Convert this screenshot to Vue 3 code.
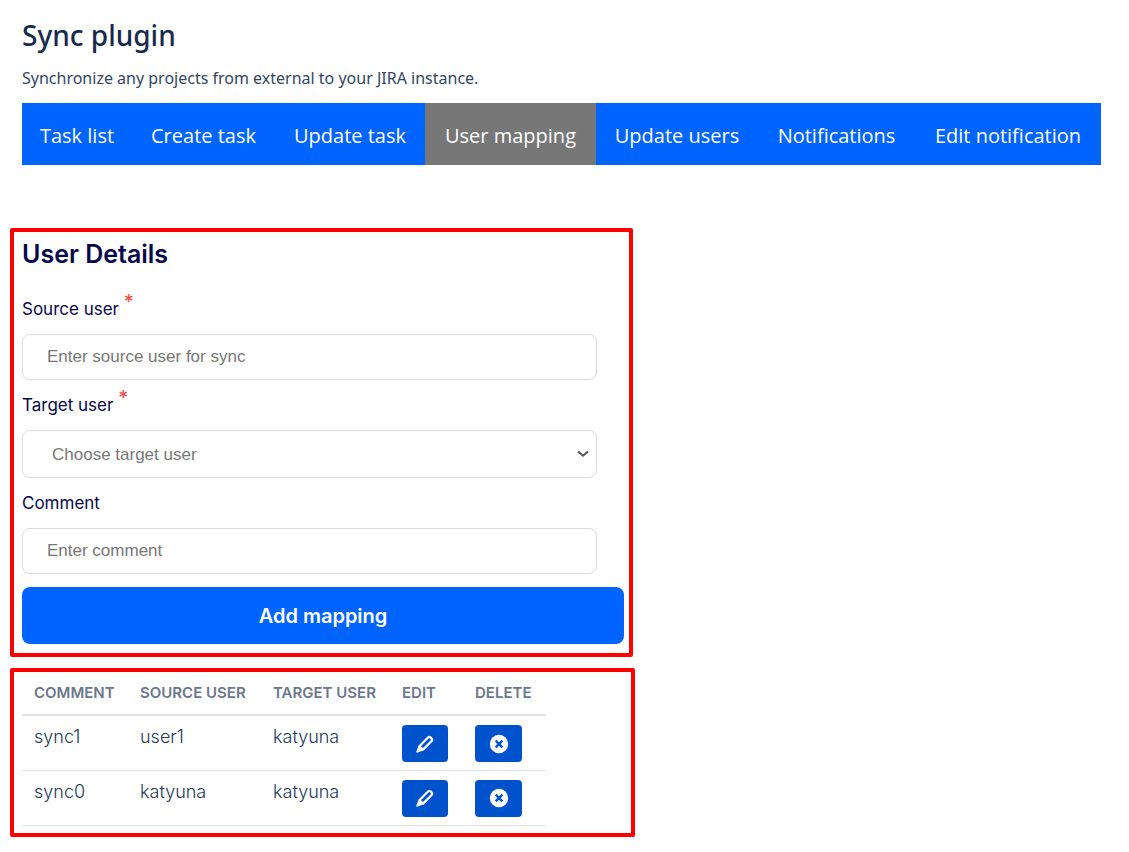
<script setup>
import { ref } from 'vue'

const tabs = ['Task list', 'Create task', 'Update task', 'User mapping', 'Update users', 'Notifications', 'Edit notification']
const activeTab = ref('User mapping')
const source = ref('')
const target = ref('')
const comment = ref('')
const rows = ref([
  { comment: 'sync1', source: 'user1', target: 'katyuna' },
  { comment: 'sync0', source: 'katyuna', target: 'katyuna' },
])
</script>

<template>
  <main class="page">
    <header class="intro">
      <h1>Sync plugin</h1>
      <p>Synchronize any projects from external to your JIRA instance.</p>
    </header>

    <nav class="tabs">
      <a
        v-for="tab in tabs"
        :key="tab"
        href="#"
        :class="{ active: tab === activeTab }"
        @click.prevent="activeTab = tab"
      >{{ tab }}</a>
    </nav>

    <form class="panel details" @submit.prevent>
      <h2>User Details</h2>
      <div class="fields">
        <label for="source">Source user <span class="req">*</span></label>
        <input id="source" v-model="source" type="text" placeholder="Enter source user for sync">
        <label for="target">Target user <span class="req">*</span></label>
        <div class="select">
          <select id="target" v-model="target">
            <option value="">Choose target user</option>
            <option value="katyuna">katyuna</option>
          </select>
          <svg viewBox="0 0 12 8" width="12" height="8" aria-hidden="true"><path d="M1 1.500 6 5.800l5-4.300" /></svg>
        </div>
        <label for="comment">Comment</label>
        <input id="comment" v-model="comment" type="text" placeholder="Enter comment">
      </div>
      <button class="submit" type="submit">Add mapping</button>
    </form>

    <section class="panel mappings">
      <table>
        <thead>
          <tr>
            <th class="c1">Comment</th>
            <th class="c2">Source user</th>
            <th class="c3">Target user</th>
            <th class="c4">Edit</th>
            <th class="c5">Delete</th>
          </tr>
        </thead>
        <tbody>
          <tr v-for="row in rows" :key="row.comment">
            <td>{{ row.comment }}</td>
            <td>{{ row.source }}</td>
            <td>{{ row.target }}</td>
            <td>
              <button class="icon edit" type="button" aria-label="Edit">
                <svg viewBox="0 0 20 20" width="20" height="20" aria-hidden="true">
                  <path d="M4.400 12.200 13 3.400a1.700 1.700 0 0 1 2.400 0l1.200 1.200a1.700 1.700 0 0 1 0 2.400L8 15.600Z" fill="none" stroke="#fff" stroke-width="2.200" stroke-linejoin="round" />
                  <path d="M3.400 12 8.200 16.400 2.600 18.600a1 1 0 0 1-1.200-1.200Z" fill="#fff" />
                </svg>
              </button>
            </td>
            <td>
              <button class="icon delete" type="button" aria-label="Delete">
                <svg viewBox="0 0 20 20" width="20" height="20" aria-hidden="true">
                  <circle cx="10" cy="10" r="9.200" fill="#fff" />
                  <path d="m6.700 6.700 6.600 6.600m0-6.600-6.600 6.600" stroke="#0052cc" stroke-width="2.400" />
                </svg>
              </button>
            </td>
          </tr>
        </tbody>
      </table>
    </section>
  </main>
</template>

<style>
body { margin: 0; background: #fff; }
</style>

<style scoped>
* { box-sizing: border-box; }
.page { padding: 16px 28px 15px 10px; font-family: Inter, "Liberation Sans", sans-serif; }
.intro { padding-left: 12px; font-family: "Noto Sans", "Open Sans", sans-serif; color: #172b4d; }
h1 { margin: 0; font-size: 28px; line-height: 38px; font-weight: 500; }
.intro p { margin: 12px 0 0; font-size: 16px; line-height: 24px; color: #344563; }
.tabs {
  display: grid;
  grid-template-columns: 110fr 143fr 150fr 171fr 162fr 157fr 186fr;
  margin: 13px 0 0 12px;
  background: #0065ff;
  font-family: "Open Sans", "Noto Sans", sans-serif;
}
.tabs a { padding-top: 4px; font-size: 20px; line-height: 58px; color: #fff; text-align: center; text-decoration: none; white-space: nowrap; }
.tabs a.active { background: #777; }
.panel { border: 4px solid #f00; border-radius: 2px; }
.details { width: 623px; max-width: 100%; margin-top: 63px; padding: 5px 5px 9px 8px; color: #07074d; }
h2 { margin: 0; font-size: 25px; line-height: 34px; font-weight: 600; }
.fields { display: flex; flex-direction: column; margin: 13px 27px 13px 0; }
label { font-size: 17px; line-height: 50px; }
.req { color: #f44; font-size: 20px; vertical-align: 6px; line-height: 16px; }
input, select { width: 100%; margin: 0; border: 1px solid #dcdcdc; border-radius: 8px; background: #fff; color: #777; font-family: "Liberation Sans", Arial, sans-serif; font-size: 17px; }
input { height: 46px; padding: 0 24px; }
input::placeholder { color: #777; opacity: 1; }
select { height: 48px; padding: 0 29px; appearance: none; display: block; }
.select { position: relative; }
.select svg { position: absolute; right: 8px; top: 20px; fill: none; stroke: #555; stroke-width: 2; pointer-events: none; }
.submit { display: block; width: 100%; height: 57px; border: 0; border-radius: 8px; background: #0065ff; color: #fff; font: 600 20px Inter, sans-serif; }
.mappings { width: 625px; max-width: 100%; margin-top: 11px; padding: 0 8px 7px; }
table { border-collapse: collapse; table-layout: fixed; width: 524px; }
th, td { padding: 0 0 0 12px; text-align: left; white-space: nowrap; }
th { height: 43px; padding-bottom: 1px; border-bottom: 2px solid #dfe1e6; color: #6b778c; font-size: 15px; font-weight: 600; text-transform: uppercase; }
.c1 { width: 106px; }
.c2 { width: 133px; }
.c3 { width: 129px; }
.c4 { width: 73px; }
td { height: 55px; padding-top: 9px; border-bottom: 1px solid #dfe1e6; color: #253858; font-size: 18px; line-height: 24px; font-weight: 300; vertical-align: top; }
.icon { display: grid; place-items: center; height: 37px; padding: 0; border: 0; border-radius: 4px; background: #0052cc; }
.edit { width: 46px; }
.delete { width: 47px; }
</style>
